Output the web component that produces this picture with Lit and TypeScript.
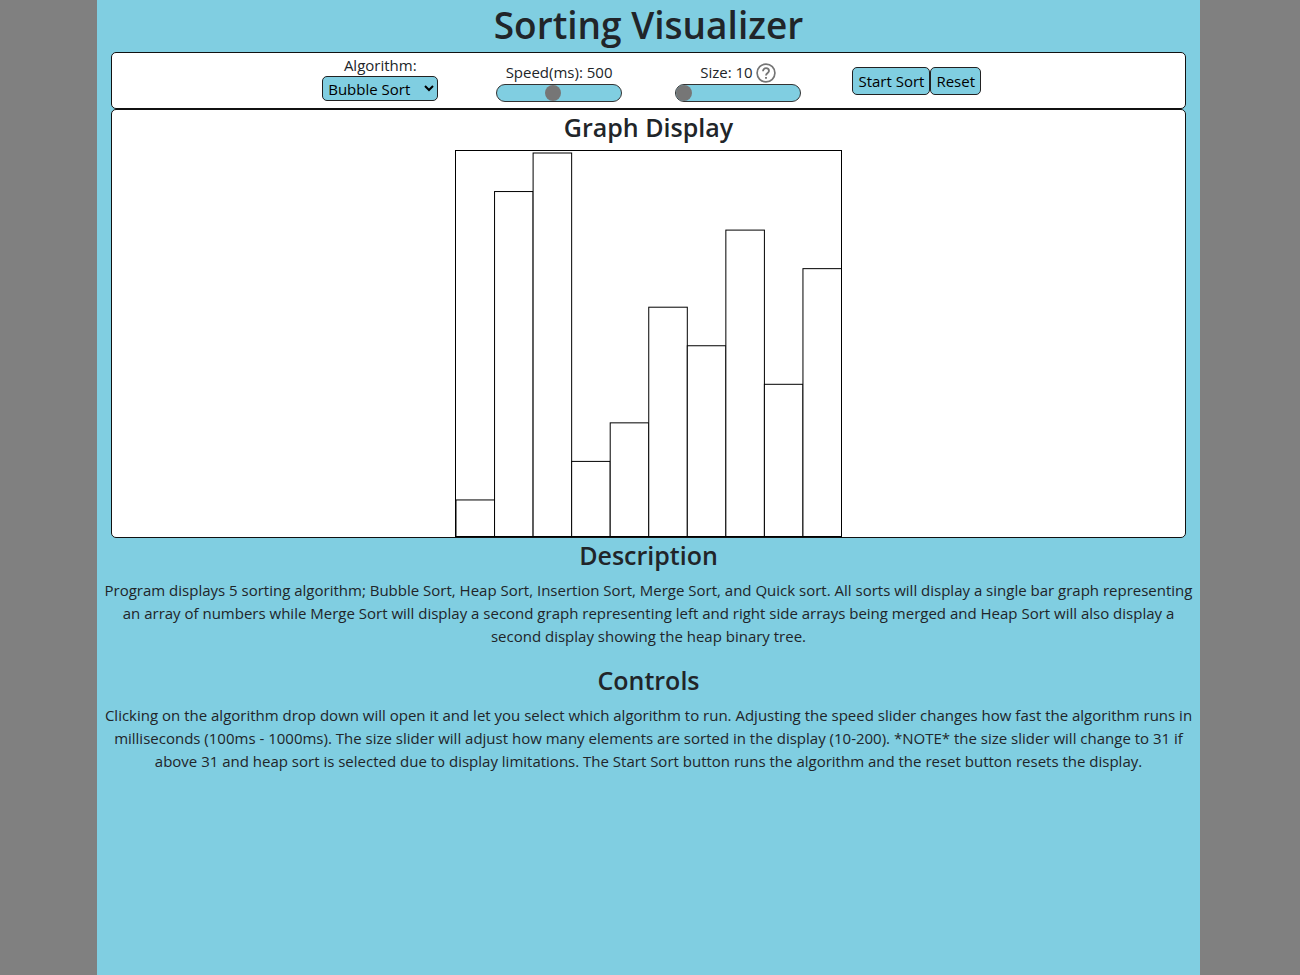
import { LitElement, html, svg, css } from "lit";
import { customElement, state } from "lit/decorators.js";

const ALGORITHMS = ["Bubble Sort", "Heap Sort", "Insertion Sort", "Merge Sort", "Quick Sort"];
const INITIAL = [1, 9, 10, 2, 3, 6, 5, 8, 4, 7];

@customElement("sort-graph")
export class SortGraph extends LitElement {
  static properties = { values: { attribute: false } };
  declare values: number[];

  static styles = css`
    :host { display: block; }
    .chart { display: block; width: 100%; height: auto; }
    .bar { fill: #fff; stroke: #000; stroke-width: 1; }
  `;

  constructor() {
    super();
    this.values = [];
  }

  render() {
    const n = this.values.length || 1;
    const step = 385.5 / n;
    const unit = 385.5 / Math.max(...this.values, 1);
    return html`<svg class="chart" viewBox="0 0 385 385" role="img" aria-label="Bar graph">
      ${this.values.map((v, i) => svg`<rect class="bar" x=${i * step} y=${387.5 - v * unit} width=${step} height=${v * unit}></rect>`)}
    </svg>`;
  }
}

@customElement("app-root")
export class AppRoot extends LitElement {
  @state() private speed = 500;
  @state() private size = 10;
  @state() private values = INITIAL;
  private timer = 0;

  static styles = css`
    :host {
      display: block;
      min-height: 100vh;
      box-sizing: border-box;
      padding: 0 100px 0 97px;
      background: #808080;
      color: #212529;
      font: 15px/23px "Open Sans", "Noto Sans", sans-serif;
    }
    * { box-sizing: border-box; }
    .page {
      min-height: 100vh;
      padding: 0 14px;
      background: #80cee1;
      text-align: center;
    }
    h1, h2, p { margin: 0; }
    h1 { font-size: 37px; line-height: 50px; font-weight: 600; padding-bottom: 2px; }
    h2 { font-size: 25px; line-height: 34px; font-weight: 600; }
    .panel { background: #fff; border: 1px solid #111; border-radius: 5px; }
    .controls {
      display: grid;
      grid-template-columns: repeat(6, 1fr);
      align-items: center;
      height: 57px;
    }
    .control { display: flex; flex-direction: column; align-items: center; padding-top: 2px; }
    .control:first-child { grid-column-start: 2; padding: 0 0 6px; }
    .caption { display: flex; align-items: center; gap: 3px; height: 22px; }
    .help { display: block; width: 20px; height: 20px; }
    .buttons { display: flex; justify-content: center; }
    select, button {
      font: inherit;
      color: #000;
      background: #80cee1;
      border: 1px solid #222;
      border-radius: 5px;
    }
    select { width: 116px; height: 25px; padding: 0 1px; }
    button { height: 28px; padding: 0 5px; line-height: 24px; white-space: nowrap; }
    .slider {
      appearance: none;
      width: 126px;
      height: 18px;
      margin: 0;
      background: #80cee1;
      border: 1px solid #333;
      border-radius: 9px;
    }
    .slider::-webkit-slider-thumb {
      appearance: none;
      width: 16px;
      height: 16px;
      border-radius: 50%;
      background: #767676;
    }
    .frame { width: 387px; max-width: 100%; margin: 6px auto 0; border: 1px solid #000; }
    .info { margin: 0 -12px; }
    .info p { padding: 7px 0 15px; }
  `;

  private reset() {
    clearInterval(this.timer);
    this.values = this.size === 10
      ? INITIAL
      : Array.from({ length: this.size }, (_, i) => i + 1).sort(() => Math.random() - 0.5);
  }

  private start() {
    clearInterval(this.timer);
    this.timer = window.setInterval(() => {
      const next = [...this.values];
      const i = next.findIndex((v, k) => k + 1 < next.length && v > next[k + 1]);
      if (i < 0) {
        clearInterval(this.timer);
        return;
      }
      [next[i], next[i + 1]] = [next[i + 1], next[i]];
      this.values = next;
    }, this.speed);
  }

  private onSpeed(e: Event) {
    this.speed = Number((e.target as HTMLInputElement).value);
  }

  private onSize(e: Event) {
    this.size = Number((e.target as HTMLInputElement).value);
    this.reset();
  }

  render() {
    return html`<main class="page">
      <h1>Sorting Visualizer</h1>
      <section class="panel controls">
        <div class="control">
          <label class="caption" for="algorithm">Algorithm:</label>
          <select id="algorithm">${ALGORITHMS.map((a) => html`<option>${a}</option>`)}</select>
        </div>
        <div class="control">
          <label class="caption" for="speed">Speed(ms): ${this.speed}</label>
          <input class="slider" id="speed" type="range" min="100" max="1000" .value=${String(this.speed)} @input=${this.onSpeed}>
        </div>
        <div class="control">
          <label class="caption" for="size">Size: ${this.size}
            <svg class="help" viewBox="0 0 20 20" fill="none" stroke="#757575" aria-hidden="true">
              <circle cx="10" cy="10" r="8.9" stroke-width="1.7"></circle>
              <path d="M7 8.2C7 6.4 8.3 5.2 10 5.2S13 6.4 13 8C13 10 10 10.1 10 12.6" stroke-width="1.8"></path>
              <path d="M10 13.9V15.7" stroke-width="1.9"></path>
            </svg>
          </label>
          <input class="slider" id="size" type="range" min="10" max="200" .value=${String(this.size)} @input=${this.onSize}>
        </div>
        <div class="buttons">
          <button type="button" @click=${this.start}>Start Sort</button>
          <button type="button" @click=${this.reset}>Reset</button>
        </div>
      </section>
      <section class="panel">
        <h2>Graph Display</h2>
        <div class="frame"><sort-graph .values=${this.values}></sort-graph></div>
      </section>
      <section class="info">
        <h2>Description</h2>
        <p>Program displays 5 sorting algorithm; Bubble Sort, Heap Sort, Insertion Sort, Merge Sort, and Quick sort. All sorts will display a single bar graph representing an array of numbers while Merge Sort will display a second graph representing left and right side arrays being merged and Heap Sort will also display a second display showing the heap binary tree.</p>
      </section>
      <section class="info">
        <h2>Controls</h2>
        <p>Clicking on the algorithm drop down will open it and let you select which algorithm to run. Adjusting the speed slider changes how fast the algorithm runs in milliseconds (100ms - 1000ms). The size slider will adjust how many elements are sorted in the display (10-200). *NOTE* the size slider will change to 31 if above 31 and heap sort is selected due to display limitations. The Start Sort button runs the algorithm and the reset button resets the display.</p>
      </section>
    </main>`;
  }
}
